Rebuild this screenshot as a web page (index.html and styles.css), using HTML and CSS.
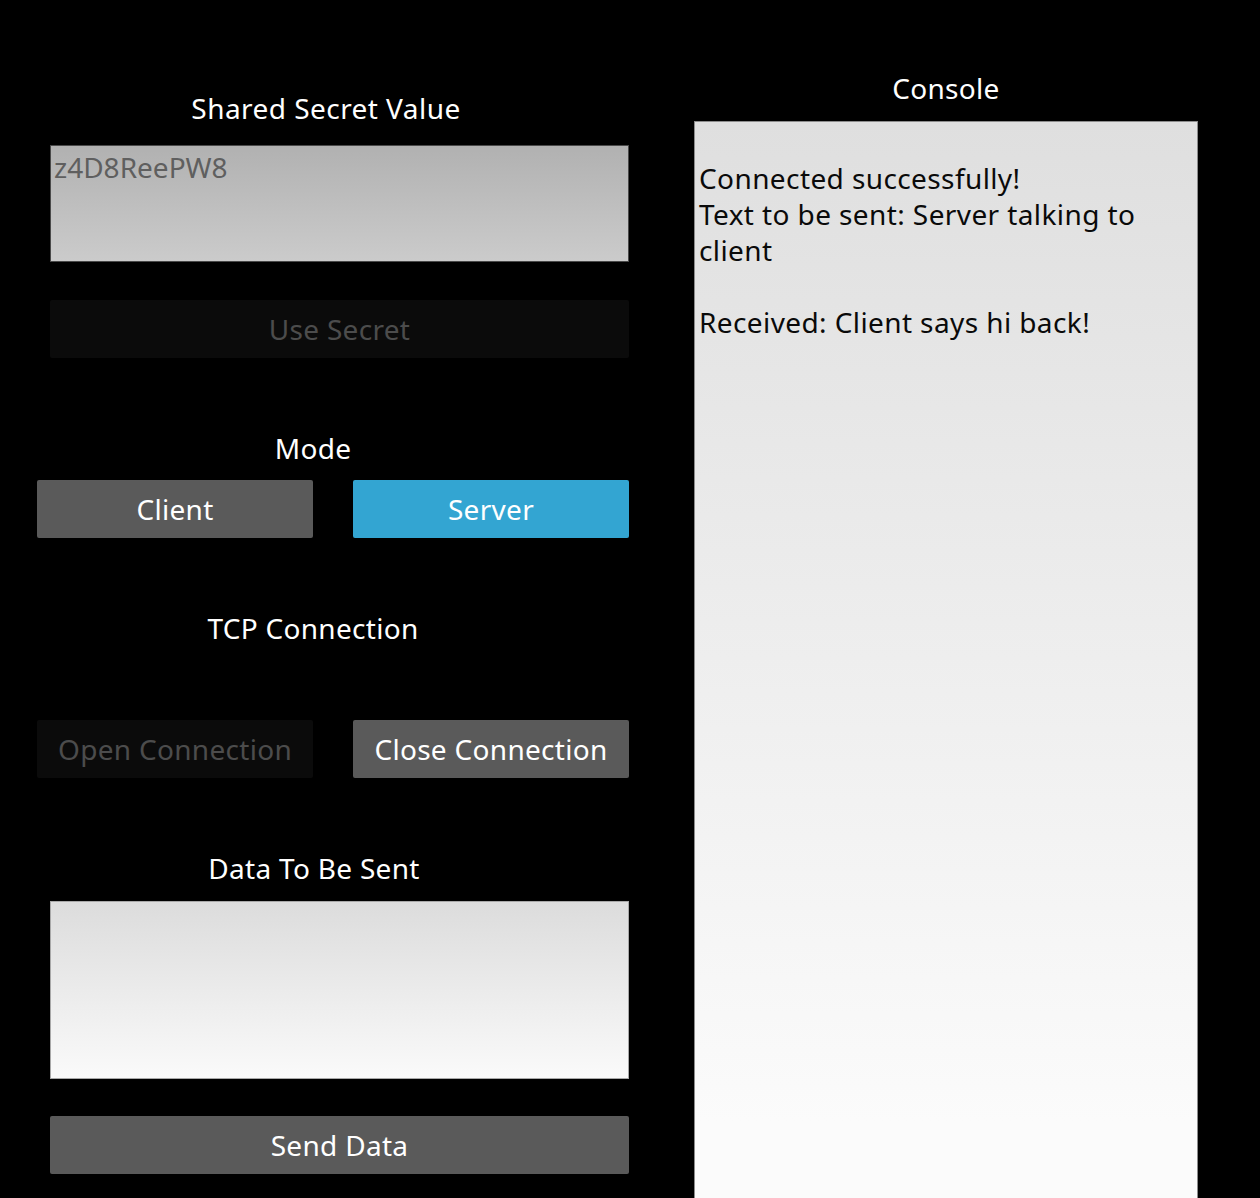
FILE: index.html
```html
<!DOCTYPE html>
<html>
<head>
<meta charset="utf-8">
<link rel="stylesheet" href="styles.css">
</head>
<body>
<div class="app">
  <div class="left">
    <div class="title t-secret">Shared Secret Value</div>
    <div class="field field-secret">z4D8ReePW8</div>
    <div class="btn btn-disabled btn-wide btn-use">Use Secret</div>
    <div class="title t-mode">Mode</div>
    <div class="row">
      <div class="btn btn-normal">Client</div>
      <div class="btn btn-active">Server</div>
    </div>
    <div class="title t-tcp">TCP Connection</div>
    <div class="row row-tcp">
      <div class="btn btn-disabled">Open Connection</div>
      <div class="btn btn-normal">Close Connection</div>
    </div>
    <div class="title t-data">Data To Be Sent</div>
    <div class="field field-data"></div>
    <div class="btn btn-normal btn-wide btn-send">Send Data</div>
  </div>
  <div class="right">
    <div class="title t-console">Console</div>
    <div class="console">
      <div class="line">Connected successfully!</div>
      <div class="line">Text to be sent: Server talking to client</div>
      <div class="line">&nbsp;</div>
      <div class="line">Received: Client says hi back!</div>
    </div>
  </div>
</div>
</body>
</html>
```

FILE: styles.css
```css
html, body {
  margin: 0;
  padding: 0;
  background: #000;
  height: 1198px;
  overflow: hidden;
}
body {
  font-family: "Noto Sans", "Open Sans", "DejaVu Sans", sans-serif;
  font-size: 28px;
  line-height: 36px;
  color: #fff;
}
.app {
  display: flex;
  padding-left: 37px;
}
.left {
  width: 592px;
  display: flex;
  flex-direction: column;
}
.right {
  width: 504px;
  margin-left: 65px;
  display: flex;
  flex-direction: column;
}
.title {
  text-align: center;
  color: #fff;
  letter-spacing: 0.3px;
}
.t-secret {
  margin-top: 90px;
  padding-right: 14px;
  letter-spacing: 0.45px;
}
.t-mode {
  margin-top: 72px;
  padding-right: 40px;
}
.t-tcp {
  margin-top: 72px;
  padding-right: 40px;
}
.t-data {
  margin-top: 72px;
  padding-right: 38px;
}
.t-console {
  margin-top: 70px;
}
.field {
  margin-left: 13px;
  width: 579px;
  box-sizing: border-box;
}
.field-secret {
  margin-top: 19px;
  height: 117px;
  border: 1px solid #4a4a4a;
  background: linear-gradient(#b1b1b1, #cbcbcb);
  color: #5f5f5f;
  padding: 3px 3px;
}
.field-data {
  margin-top: 15px;
  height: 178px;
  border: 1px solid #a8a8a8;
  background: linear-gradient(#dcdcdc, #fafafa);
}
.btn {
  height: 58px;
  display: flex;
  align-items: center;
  justify-content: center;
  border-radius: 2px;
  letter-spacing: 0.3px;
}
.btn-wide {
  margin-left: 13px;
  width: 579px;
}
.btn-use {
  margin-top: 38px;
}
.btn-send {
  margin-top: 37px;
}
.btn-disabled {
  background: #0b0b0b;
  color: #4c4c4c;
}
.btn-normal {
  background: #5a5a5a;
  color: #fff;
}
.btn-active {
  background: #33a5d2;
  color: #fff;
}
.row {
  margin-top: 14px;
  display: flex;
  gap: 40px;
}
.row .btn {
  width: 276px;
}
.row-tcp {
  margin-top: 74px;
}
.console {
  margin-top: 15px;
  height: 1100px;
  box-sizing: border-box;
  border: 1px solid #8c8c8c;
  background: linear-gradient(#dfdfdf, #fbfbfb 1000px);
  color: #0a0a0a;
  padding: 38px 40px 0 4px;
}
.line {
  letter-spacing: 0.4px;
}
```
